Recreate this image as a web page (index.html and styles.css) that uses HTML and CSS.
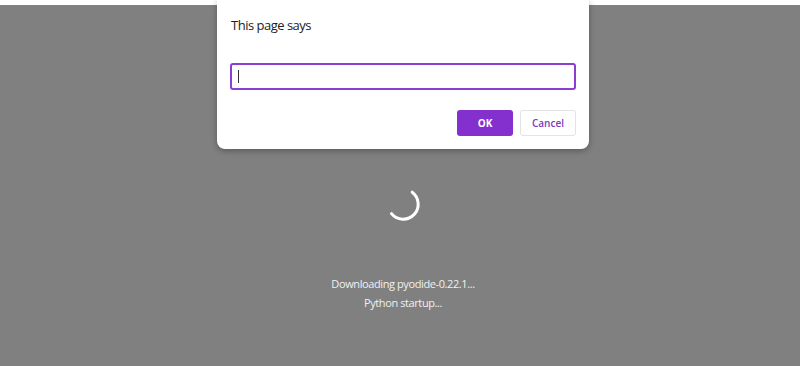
FILE: index.html
```html
<!DOCTYPE html>
<html lang="en">
<head>
    <meta charset="UTF-8">
    <meta name="viewport" content="width=device-width, initial-scale=1.0">
    <title>Pyodide</title>
    <link rel="stylesheet" href="styles.css">
</head>
<body>
    <div class="topbar"></div>

    <main class="loader">
        <svg class="spinner" width="36" height="36" viewBox="0 0 36 36">
            <path d="M27.2 6.2 A15 15 0 1 1 6.5 27.6" fill="none" stroke="#fff" stroke-width="3" stroke-linecap="round"/>
        </svg>
        <div class="status">
            <p>Downloading pyodide-0.22.1...</p>
            <p>Python startup...</p>
        </div>
    </main>

    <div class="dialog">
        <div class="dialog-title">This page says</div>
        <div class="dialog-input"><span class="caret"></span></div>
        <div class="dialog-buttons">
            <button class="btn btn-ok">OK</button>
            <button class="btn btn-cancel">Cancel</button>
        </div>
    </div>
</body>
</html>
```

FILE: styles.css
```css
body {
    margin: 0;
    background-color: #808080;
    font-family: "Open Sans", "Noto Sans", sans-serif;
    height: 366px;
    overflow: hidden;
}
.topbar {
    height: 5px;
    background-color: #fff;
}
.loader {
    display: flex;
    flex-direction: column;
    align-items: center;
    padding-top: 181px;
    padding-left: 6px;
}
.spinner {
    display: block;
}
.status {
    margin-top: 52px;
    text-align: center;
    color: #f0f0f0;
    font-size: 11px;
    letter-spacing: -0.4px;
}
.status p {
    margin: 0;
    line-height: 19px;
}
.dialog {
    position: absolute;
    left: 217px;
    top: 0;
    width: 372px;
    height: 149px;
    box-sizing: border-box;
    background: #fff;
    border-radius: 0 0 8px 8px;
    box-shadow: 0 2px 6px rgba(0,0,0,0.3);
    padding: 16px 13px 0 13px;
}
.dialog-title {
    font-size: 13px;
    letter-spacing: -0.5px;
    color: #202124;
    line-height: 18px;
    padding-left: 1px;
}
.dialog-input {
    margin-top: 29px;
    height: 27px;
    box-sizing: border-box;
    border: 2px solid #8a3fd1;
    border-radius: 3px;
    display: flex;
    align-items: center;
    padding-left: 6px;
}
.caret {
    width: 1px;
    height: 13px;
    background: #333;
}
.dialog-buttons {
    display: flex;
    justify-content: flex-end;
    gap: 7px;
    margin-top: 20px;
}
.btn {
    width: 56px;
    height: 26px;
    border-radius: 3px;
    font-family: "Open Sans", sans-serif;
    font-size: 10px;
    font-weight: 600;
    padding: 0;
}
.btn-ok {
    background: #8430ce;
    color: #fff;
    border: none;
    font-weight: 700;
}
.btn-cancel {
    background: #fff;
    color: #7a3cc0;
    border: 1px solid #e3e3e3;
}
```
